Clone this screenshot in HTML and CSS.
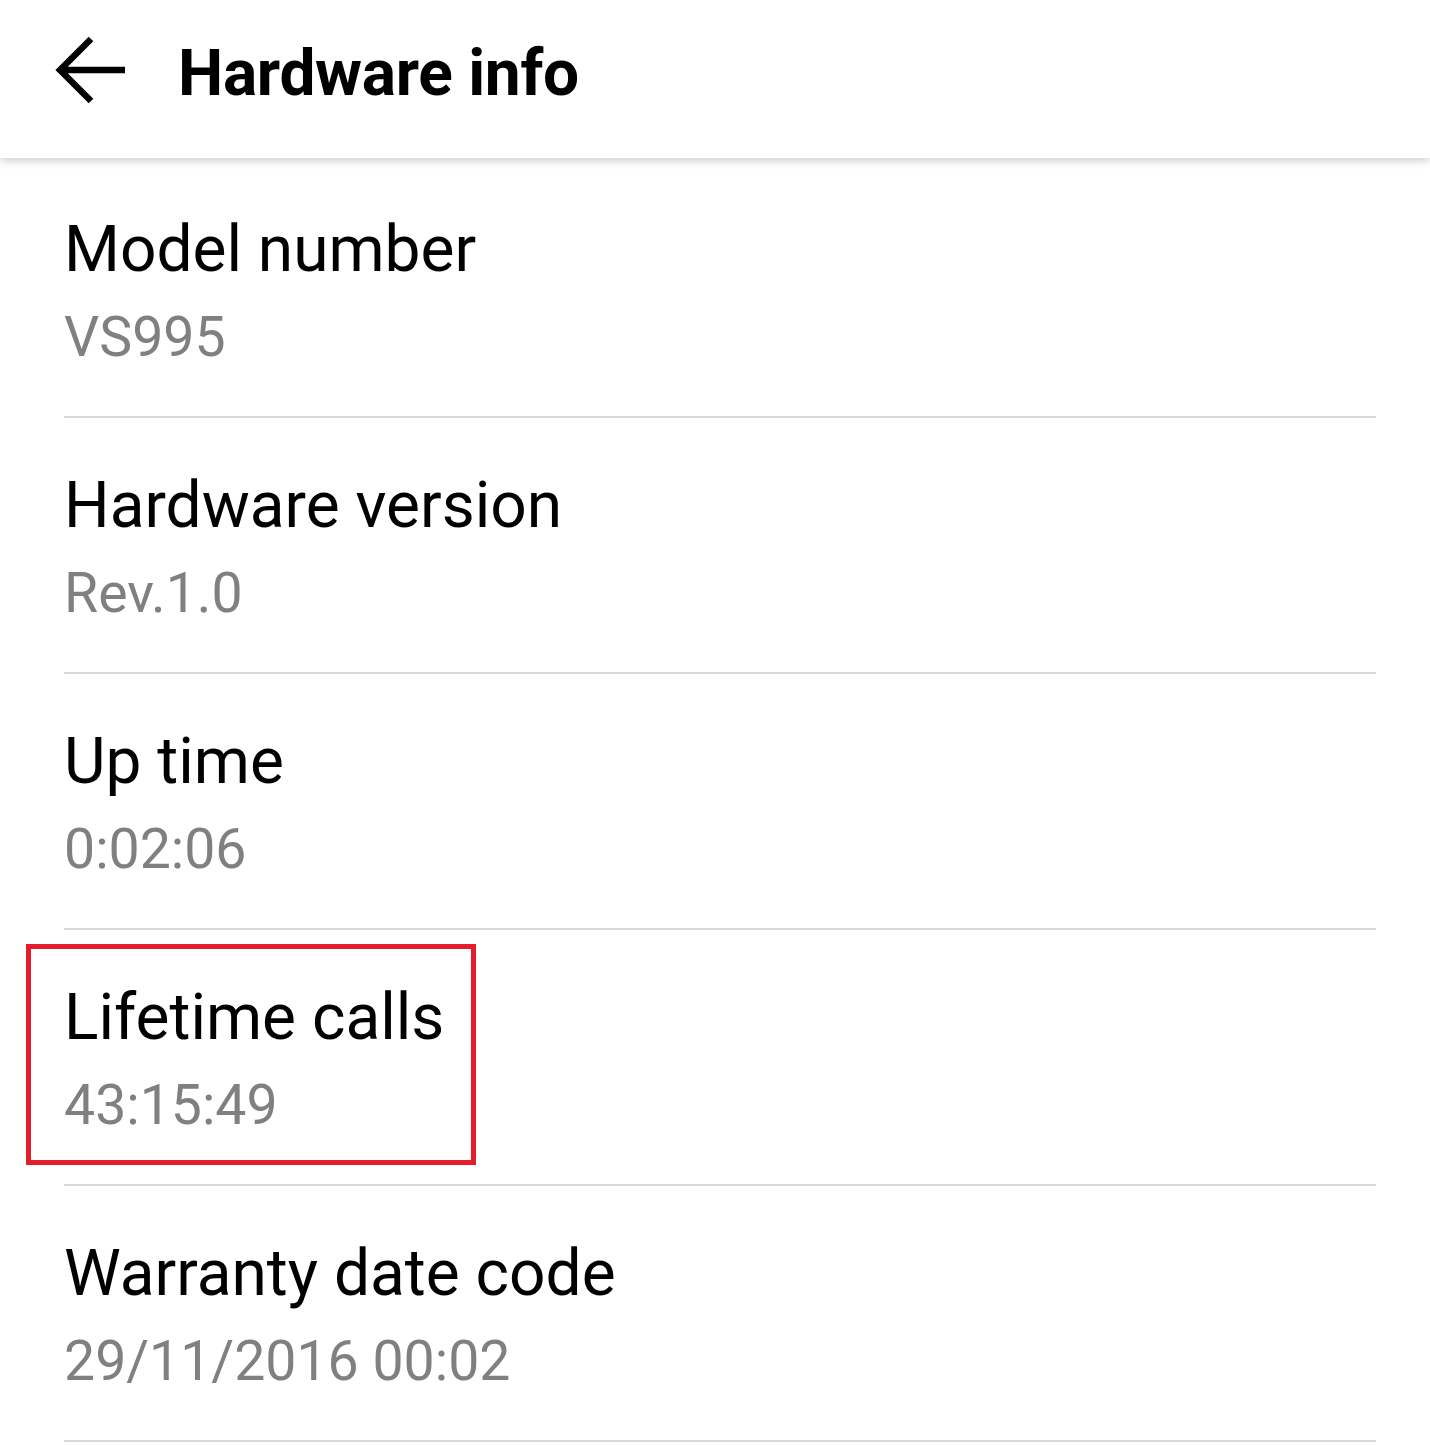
FILE: index.html
```html
<!DOCTYPE html>
<html lang="en">
<head>
<meta charset="utf-8">
<title>Hardware info</title>
<link rel="stylesheet" href="styles.css">
</head>
<body>
<header class="appbar">
  <svg class="back" width="80" height="80" viewBox="0 0 80 80" aria-hidden="true">
    <path d="M9 40 H74 M40 9 L9 40 L40 71" fill="none" stroke="#000" stroke-width="6.5" stroke-linecap="butt" stroke-linejoin="miter"/>
  </svg>
  <h1 class="title">Hardware info</h1>
</header>
<main class="list">
  <div class="row">
    <div class="label">Model number</div>
    <div class="value">VS995</div>
  </div>
  <div class="row">
    <div class="label">Hardware version</div>
    <div class="value">Rev.1.0</div>
  </div>
  <div class="row">
    <div class="label">Up time</div>
    <div class="value">0:02:06</div>
  </div>
  <div class="row">
    <div class="label">Lifetime calls</div>
    <div class="value">43:15:49</div>
    <div class="highlight"></div>
  </div>
  <div class="row">
    <div class="label">Warranty date code</div>
    <div class="value">29/11/2016 00:02</div>
  </div>
</main>
</body>
</html>
```
FILE: styles.css
```css
html, body {
  margin: 0;
  padding: 0;
  background: #ffffff;
}
body {
  font-family: Roboto, "Noto Sans", "Liberation Sans", sans-serif;
  color: #000;
  overflow: hidden;
}
.appbar {
  position: relative;
  z-index: 2;
  height: 158px;
  display: flex;
  align-items: center;
  background: #fff;
  box-shadow: 0 2px 9px rgba(0, 0, 0, 0.22);
}
.back {
  margin-left: 51px;
  margin-top: -18px;
  flex: none;
}
.title {
  margin: 0 0 0 47px;
  margin-top: -10px;
  font-size: 64px;
  font-weight: 700;
  letter-spacing: -0.3px;
  line-height: 80px;
}
.list {
  padding: 4px 54px 0 64px;
}
.row {
  position: relative;
  padding: 48px 0 38px 0;
  border-bottom: 2px solid #dadada;
}
.label {
  font-size: 64px;
  line-height: 80px;
  color: #000;
}
.value {
  margin-top: 8px;
  font-size: 55.4px;
  line-height: 80px;
  color: #808080;
}
.highlight {
  position: absolute;
  left: -38px;
  top: 14px;
  width: 440px;
  height: 211px;
  border: 5px solid #e31e2a;
}
```
